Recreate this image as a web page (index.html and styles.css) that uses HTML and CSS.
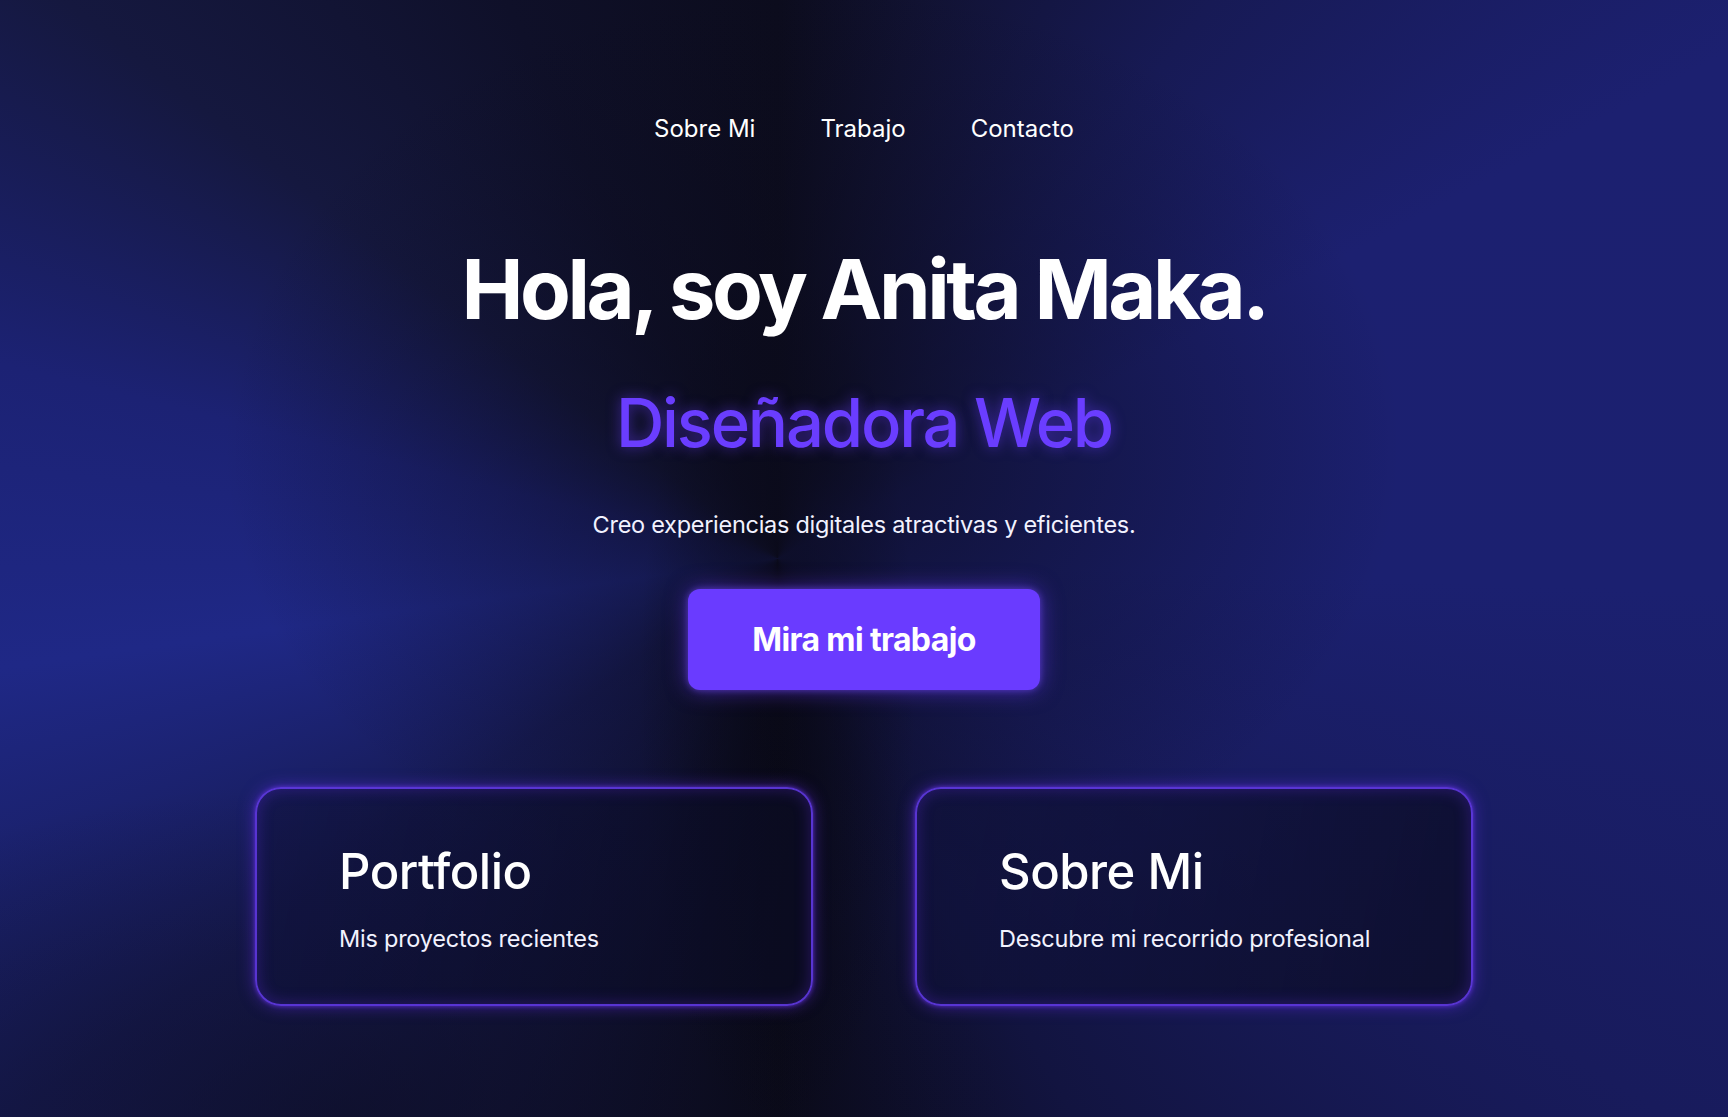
FILE: index.html
```html
<!DOCTYPE html>
<html lang="es">
<head>
<meta charset="utf-8">
<title>Anita Maka — Diseñadora Web</title>
<link rel="stylesheet" href="styles.css">
</head>
<body>
<div class="page">
  <nav class="nav">
    <a class="nav-link" href="#sobre">Sobre Mi</a>
    <a class="nav-link" href="#trabajo">Trabajo</a>
    <a class="nav-link" href="#contacto">Contacto</a>
  </nav>
  <main class="hero">
    <h1 class="hero-title">Hola, soy Anita Maka.</h1>
    <h2 class="hero-role">Diseñadora Web</h2>
    <p class="hero-text">Creo experiencias digitales atractivas y eficientes.</p>
    <a class="cta" href="#trabajo">Mira mi trabajo</a>
    <section class="cards">
      <a class="card" href="#portfolio">
        <h3 class="card-title">Portfolio</h3>
        <p class="card-text">Mis proyectos recientes</p>
      </a>
      <a class="card" href="#sobre">
        <h3 class="card-title">Sobre Mi</h3>
        <p class="card-text">Descubre mi recorrido profesional</p>
      </a>
    </section>
  </main>
</div>
</body>
</html>
```

FILE: styles.css
```css
* { box-sizing: border-box; }

html, body {
  margin: 0;
  padding: 0;
  height: 100%;
}

body {
  font-family: Inter, "Noto Sans", "Liberation Sans", sans-serif;
  color: #ffffff;
  background-color: #0f102b;
  overflow: hidden;
}

.page {
  min-height: 100vh;
  display: flex;
  flex-direction: column;
  align-items: center;
  background:
    radial-gradient(ellipse 34% 42% at 47% 40%, rgba(11, 11, 28, 0.8) 0%, rgba(11, 11, 28, 0.35) 55%, rgba(11, 11, 28, 0) 100%),
    radial-gradient(ellipse 8% 40% at 45% 62%, rgba(8, 8, 20, 0.75) 0%, rgba(8, 8, 20, 0) 100%),
    radial-gradient(ellipse 40% 30% at 20% 100%, rgba(12, 12, 30, 0.55) 0%, rgba(12, 12, 30, 0) 100%),
    conic-gradient(from 0deg at 45% 50%,
      #0c0c1d 0deg,
      #111232 14deg,
      #171a55 38deg,
      #1c2070 62deg,
      #1b2070 92deg,
      #181b5c 122deg,
      #121440 152deg,
      #0a0a18 180deg,
      #111338 206deg,
      #161a52 234deg,
      #1f2886 262deg,
      #1c2274 284deg,
      #15183f 308deg,
      #0f1029 334deg,
      #0c0c1d 360deg);
}

.nav {
  display: flex;
  gap: 65px;
  padding-top: 115px;
}

.nav-link {
  color: #ffffff;
  text-decoration: none;
  font-size: 24px;
  line-height: 28px;
  font-weight: 400;
}

.hero {
  display: flex;
  flex-direction: column;
  align-items: center;
  padding-top: 105px;
}

.hero-title {
  margin: 0;
  font-size: 83px;
  line-height: 1;
  font-weight: 700;
  letter-spacing: -0.042em;
}

.hero-role {
  margin: 58px 0 0;
  font-size: 67px;
  line-height: 1;
  font-weight: 500;
  letter-spacing: -0.033em;
  color: #6a3dff;
  text-shadow: 0 0 14px rgba(106, 61, 255, 0.55);
}

.hero-text {
  margin: 56px 0 0;
  font-size: 23.5px;
  line-height: 26px;
  letter-spacing: -0.012em;
  color: #f2f2ff;
}

.cta {
  margin-top: 51px;
  width: 352px;
  padding: 32px 0;
  text-align: center;
  background: #6a3bff;
  border-radius: 12px;
  color: #ffffff;
  text-decoration: none;
  font-size: 32px;
  line-height: 37px;
  font-weight: 700;
  letter-spacing: -0.02em;
  box-shadow: 0 0 22px rgba(106, 59, 255, 0.6), 0 0 6px rgba(130, 90, 255, 0.5);
}

.cards {
  display: flex;
  gap: 102px;
  margin-top: 97px;
}

.card {
  width: 558px;
  padding: 54px 40px 51px 82px;
  border: 2px solid rgba(98, 58, 228, 0.9);
  border-radius: 26px;
  background: linear-gradient(100deg, rgba(16, 18, 60, 0.55) 0%, rgba(11, 12, 34, 0.75) 100%);
  box-shadow: 0 0 16px rgba(110, 48, 255, 0.5), 0 0 4px rgba(120, 60, 255, 0.6), inset 0 0 16px rgba(110, 48, 255, 0.3);
  color: #ffffff;
  text-decoration: none;
}

.card-title {
  margin: 0;
  font-size: 49px;
  line-height: 58px;
  font-weight: 500;
  letter-spacing: -0.01em;
}

.card-text {
  margin: 24px 0 0;
  font-size: 23.5px;
  line-height: 28px;
  letter-spacing: -0.01em;
  color: #f2f2ff;
}
```
